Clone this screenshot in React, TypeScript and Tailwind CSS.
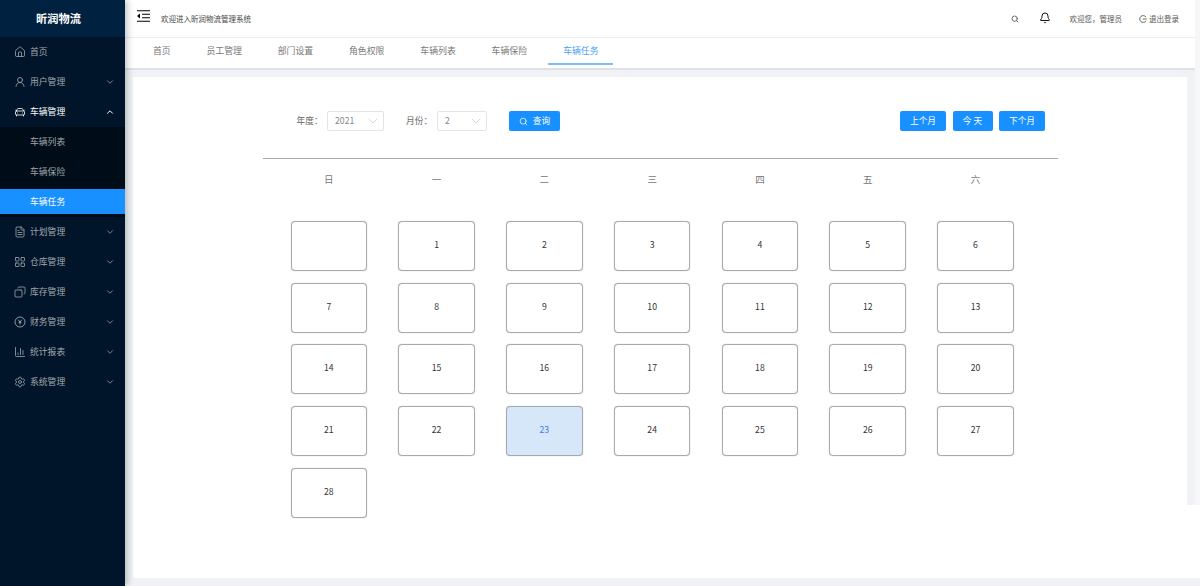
import type { ReactNode } from "react";
import {
  Bell,
  CarFront,
  ChartColumn,
  ChevronDown,
  ChevronUp,
  Copy,
  FileText,
  House,
  LayoutGrid,
  Search,
  Settings,
  UserRound,
} from "lucide-react";

const font = { fontFamily: '"Noto Sans CJK SC", "Liberation Sans", sans-serif' };

function YenCircle({ size = 12, className }: { size?: number; className?: string }) {
  return (
    <svg width={size} height={size} viewBox="0 0 24 24" fill="none" stroke="currentColor" strokeWidth="1.8" className={className}>
      <circle cx="12" cy="12" r="10" />
      <path d="M8.5 7.5 12 12.5l3.5-5M12 12.5V17M9.5 13h5" />
    </svg>
  );
}

const menuTop = [
  { label: "首页", icon: House, className: "" },
  { label: "用户管理", icon: UserRound, className: "", arrow: true },
];

const menuBottom = [
  { label: "计划管理", icon: FileText, className: "" },
  { label: "仓库管理", icon: LayoutGrid, className: "" },
  { label: "库存管理", icon: Copy, className: "-scale-x-100" },
  { label: "财务管理", icon: YenCircle, className: "" },
  { label: "统计报表", icon: ChartColumn, className: "" },
  { label: "系统管理", icon: Settings, className: "" },
];

const tabs = ["首页", "员工管理", "部门设置", "角色权限", "车辆列表", "车辆保险"];
const weekDays = ["日", "一", "二", "三", "四", "五", "六"];

type MenuProps = {
  label: string;
  icon: typeof House | typeof YenCircle;
  className: string;
  arrow?: boolean;
};

function MenuRow({ label, icon: Icon, className, arrow }: MenuProps) {
  return (
    <div className="flex h-[30px] items-center pl-[14px] pr-[10px] text-[#a0a7ae]">
      <Icon size={12} strokeWidth={1.6} className={`shrink-0 ${className}`} />
      <span className="ml-[4px] flex-1 text-[8.8px]">{label}</span>
      {arrow && <ChevronDown size={10} strokeWidth={1.8} />}
    </div>
  );
}

function Sidebar() {
  return (
    <aside className="z-10 flex w-[125px] shrink-0 flex-col bg-[#001529] shadow-[2px_0_7px_rgba(0,21,41,0.28)]">
      <div className="flex h-[37px] items-center justify-center bg-[#002140] pr-[8px] text-[11.2px] font-bold text-white">
        昕润物流
      </div>
      <div>
        {menuTop.map((m) => (
          <MenuRow key={m.label} {...m} />
        ))}
        <div className="flex h-[30px] items-center pl-[14px] pr-[10px] text-white">
          <CarFront size={12} strokeWidth={1.6} className="shrink-0" />
          <span className="ml-[4px] flex-1 text-[8.8px]">车辆管理</span>
          <ChevronUp size={10} strokeWidth={2.4} />
        </div>
        <div className="bg-[#000c17] text-[8.8px] text-[#a0a7ae]">
          <div className="flex h-[30px] items-center pl-[30px]">车辆列表</div>
          <div className="flex h-[30px] items-center pl-[30px]">车辆保险</div>
          <div className="mt-[2px] flex h-[25px] items-center bg-[#1890ff] pl-[30px] text-white">车辆任务</div>
          <div className="h-[3px]" />
        </div>
        {menuBottom.map((m) => (
          <MenuRow key={m.label} {...m} arrow />
        ))}
      </div>
    </aside>
  );
}

function Header() {
  return (
    <div className="flex h-[38px] items-center border-b border-[#ececec] bg-white pl-[12px] pr-[16px] text-[#555]">
      <svg width="13" height="12" viewBox="0 0 13 12" className="mb-[5px] shrink-0 text-black">
        <path d="M0 .7h13M5 4.2h8M5 7.7h8M0 11.3h13" stroke="currentColor" strokeWidth="1.1" />
        <path d="M3 3.6v4.8L0 6z" fill="currentColor" />
      </svg>
      <span className="ml-[11px] flex-1 text-[7.5px] text-[#444]">欢迎进入昕润物流管理系统</span>
      <Search size={8} strokeWidth={2.6} className="text-[#555]" />
      <Bell size={12} strokeWidth={2} className="mb-[2px] ml-[20px] text-[#111]" />
      <span className="ml-[19px] text-[7.5px]">欢迎您，管理员</span>
      <span className="ml-[17px] flex items-center text-[7.5px]">
        <svg width="8" height="8" viewBox="0 0 8 8" fill="none" stroke="#555" strokeWidth="0.9" className="mr-[2px]">
          <path d="M6.9 2A3.4 3.4 0 1 0 6.9 6" />
          <path d="M3.8 4h4" />
        </svg>
        退出登录
      </span>
    </div>
  );
}

function TabBar() {
  return (
    <div className="flex h-[32px] items-start border-b-2 border-[#dfe1e5] bg-white pl-[10px] text-[8.9px] text-[#777]">
      {tabs.map((t) => (
        <div key={t} className="flex h-[26px] items-center px-[17.9px]">
          {t}
        </div>
      ))}
      <div className="ml-[3.5px] flex h-[27px] items-center border-b-2 border-[#7cbcff] px-[14.7px] text-[#4aa0f7]">
        车辆任务
      </div>
    </div>
  );
}

function Select({ value, width }: { value: string; width: string }) {
  return (
    <div className={`flex h-[20px] items-center justify-between rounded-[2px] border border-[#e4e4e4] pl-[7px] pr-[2px] text-[8.7px] text-[#888] ${width}`}>
      {value}
      <ChevronDown size={16} strokeWidth={0.9} className="text-[#bbb]" />
    </div>
  );
}

function BlueButton({ children, width }: { children: ReactNode; width: string }) {
  return (
    <div className={`flex h-[20px] items-center justify-center rounded-[2px] bg-[#1890ff] text-[8.7px] text-white ${width}`}>
      {children}
    </div>
  );
}

function Calendar() {
  const cells: (number | null)[] = [null, ...Array.from({ length: 28 }, (_, i) => i + 1)];
  return (
    <div className="ml-[130px] mt-[27px] w-[795px] border-t border-[#aaa]">
      <div className="grid grid-cols-[repeat(7,76.6px)] gap-x-[31.2px] pl-[27.5px]">
        {weekDays.map((d) => (
          <div key={d} className="flex h-[41px] items-center justify-center text-[9.5px] text-[#777]">
            {d}
          </div>
        ))}
      </div>
      <div className="mt-[21px] grid grid-cols-[repeat(7,76.6px)] gap-x-[31.2px] gap-y-[11.7px] pl-[27.5px]">
        {cells.map((c, i) => (
          <div
            key={i}
            className={`flex h-[50px] items-center justify-center rounded-[4px] border pb-[3px] text-[8.7px] shadow-[0_0_1px_#aaa] ${
              c === 23 ? "border-[#a5a9ad] bg-[#d6e7f9] text-[#4a78e8]" : "border-[#aaa] bg-white text-[#333]"
            }`}
          >
            {c}
          </div>
        ))}
      </div>
    </div>
  );
}

export default function App() {
  return (
    <div className="flex h-[586px] w-[1200px] overflow-hidden bg-white" style={font}>
      <Sidebar />
      <div className="flex min-w-0 flex-1 flex-col">
        <div className="border-r-[5px] border-[#f6f7f9]">
          <Header />
          <TabBar />
          <div className="h-[7px] bg-[#f0f2f5]" />
        </div>
        <div className="flex h-[501px]">
          <div className="w-[8px] bg-[#f0f2f5]" />
          <div className="w-[1054px] bg-white">
            <div className="flex items-center pl-[163.5px] pr-[142px] pt-[34px] text-[8.7px] text-[#666]">
              <span className="w-[30.5px]">年度：</span>
              <Select value="2021" width="w-[57px]" />
              <span className="ml-[22px] w-[31px]">月份：</span>
              <Select value="2" width="w-[50px]" />
              <div className="ml-[22px]">
                <BlueButton width="w-[51px]">
                  <Search size={9} strokeWidth={2} className="mr-[5px]" />查询
                </BlueButton>
              </div>
              <div className="ml-auto flex gap-[6.5px]">
                <BlueButton width="w-[46px]">上个月</BlueButton>
                <BlueButton width="w-[40px]">今 天</BlueButton>
                <BlueButton width="w-[46px]">下个月</BlueButton>
              </div>
            </div>
            <Calendar />
          </div>
          <div className="w-[13px]">
            <div className="h-[428px] border-r-[5px] border-[#f6f7f9] bg-[#f0f2f5]" />
          </div>
        </div>
        <div className="h-[8px] bg-[#f0f2f5]" />
      </div>
    </div>
  );
}
